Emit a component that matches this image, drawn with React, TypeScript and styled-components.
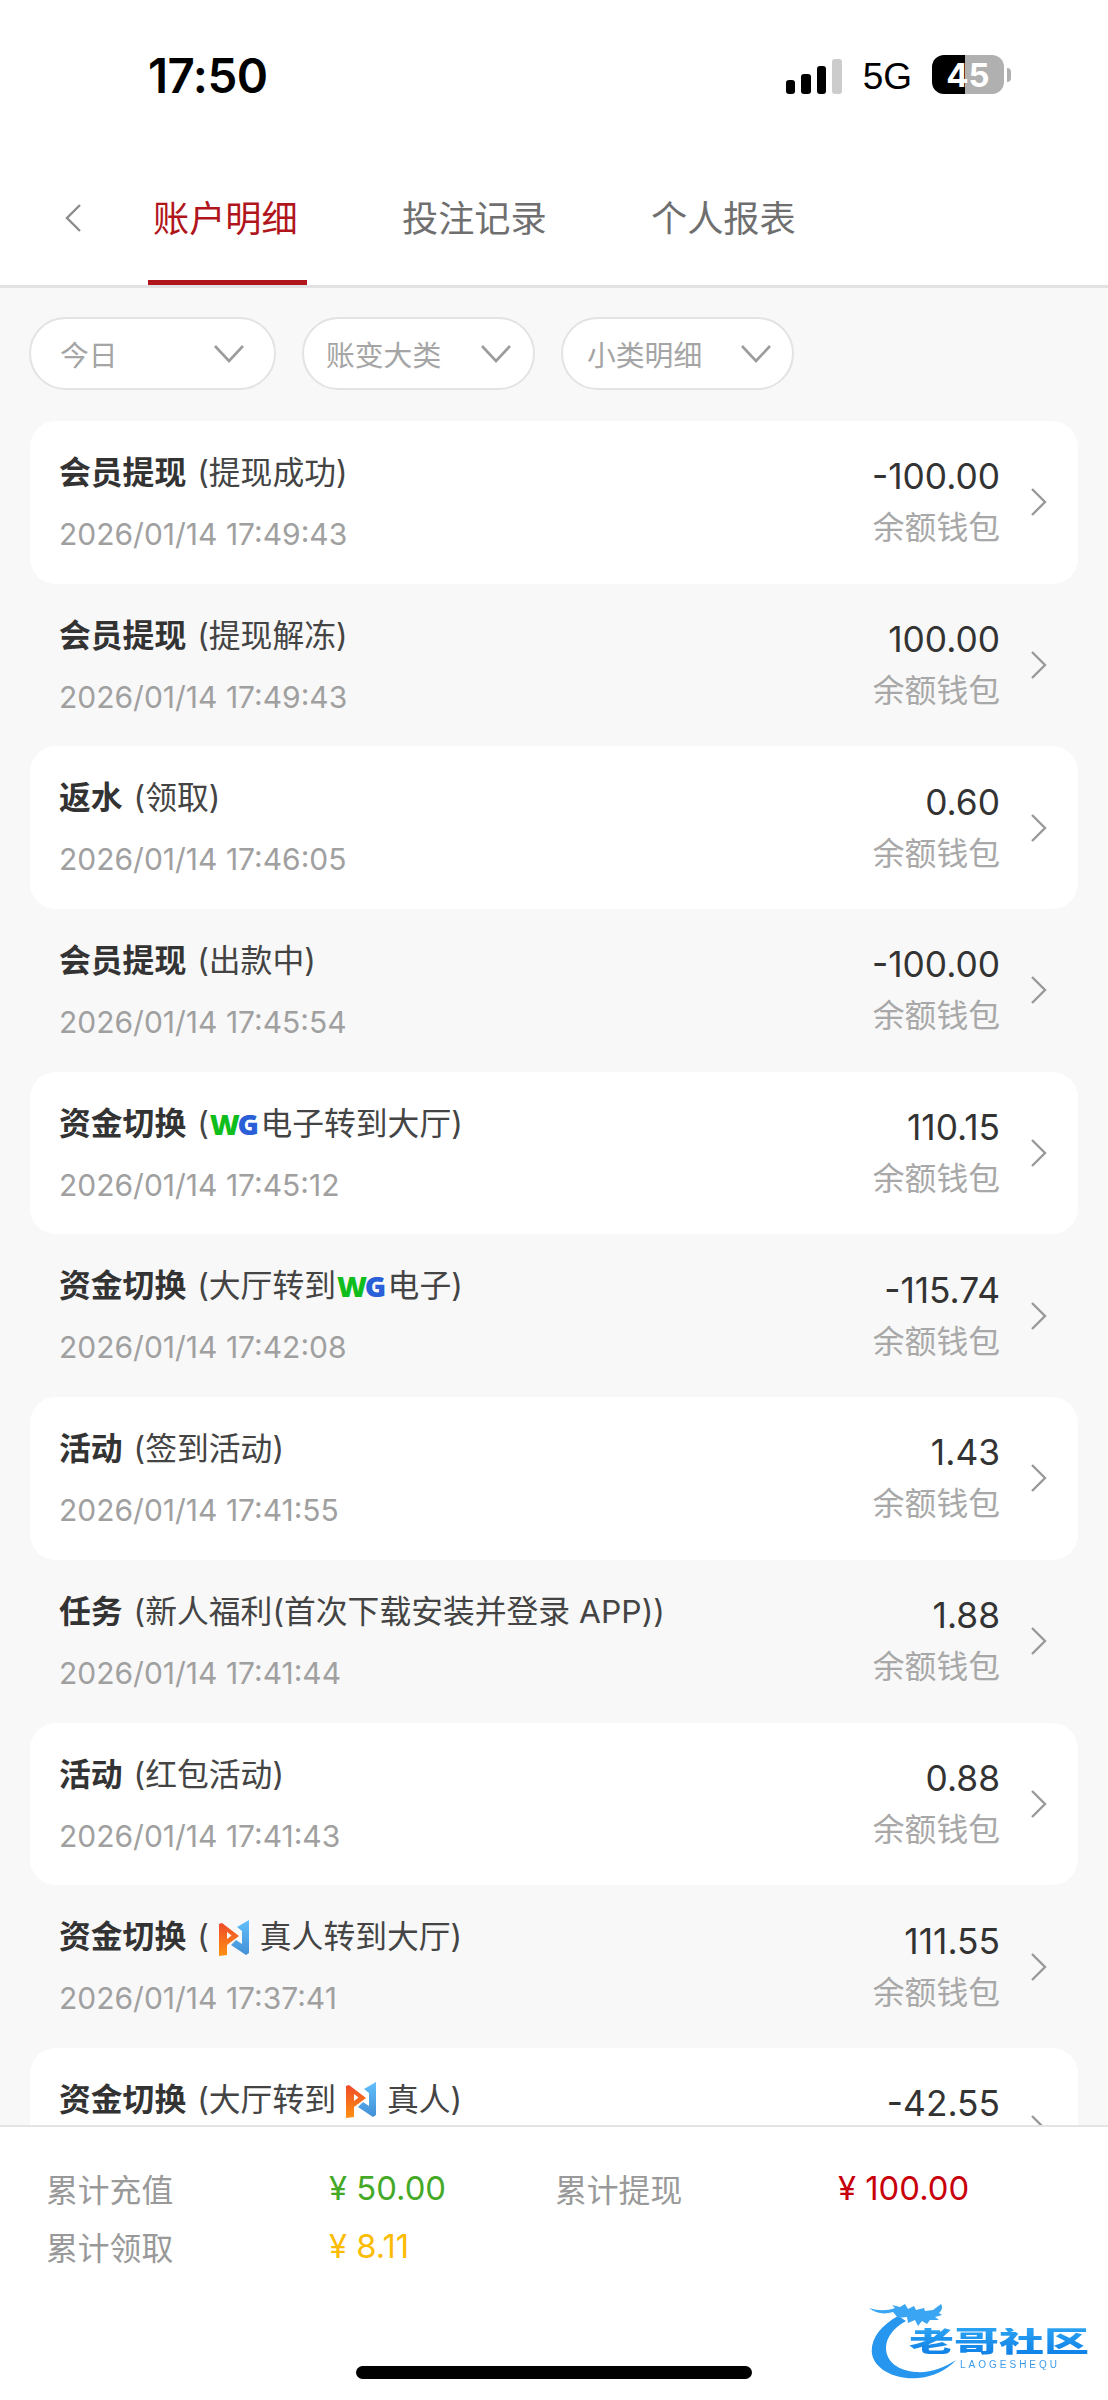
import React from 'react';
import styled, { createGlobalStyle } from 'styled-components';

const GlobalStyle = createGlobalStyle`
  html, body {
    margin: 0;
    padding: 0;
    background: #fff;
  }
  body {
    font-family: Inter, "Noto Sans CJK SC", sans-serif;
  }
`;

const Page = styled.div`
  width: 1108px;
  height: 2400px;
  display: flex;
  flex-direction: column;
  overflow: hidden;
  background: #fff;
`;

const StatusBar = styled.div`
  height: 160px;
  box-sizing: border-box;
  padding: 53px 97px 0 148px;
  display: flex;
  justify-content: space-between;
  align-items: flex-start;
  color: #000;
`;

const Clock = styled.div`
  font-size: 47.5px;
  line-height: 46px;
  font-weight: 600;
  letter-spacing: -0.5px;
`;

const StatusIcons = styled.div`
  display: flex;
  align-items: center;
  height: 39px;
  margin-top: 2px;
`;

const SignalBars = styled.div`
  display: flex;
  align-items: flex-end;
  gap: 6px;
  height: 35px;
  margin-top: 4px;
`;

const SignalBar = styled.span<{ $h: number; $off?: boolean }>`
  width: 9.5px;
  height: ${p => p.$h}px;
  border-radius: 3px;
  background: ${p => (p.$off ? '#ccc' : '#000')};
`;

const NetworkLabel = styled.span`
  font-family: 'Liberation Sans', sans-serif;
  font-size: 37px;
  line-height: 39px;
  margin: 3px 20px 0 21px;
`;

const Battery = styled.div`
  position: relative;
  width: 72px;
  height: 39px;
  border-radius: 12px;
  overflow: hidden;
  display: flex;
  align-items: center;
  justify-content: center;
  color: #fff;
  font-size: 33px;
  font-weight: 700;
  background: linear-gradient(90deg, #000 0, #000 33px, #b0b0b0 33px, #b0b0b0 100%);
`;

const BatteryNub = styled.span`
  width: 4px;
  height: 14px;
  margin-left: 3px;
  border-radius: 0 4px 4px 0;
  background: #b0b0b0;
`;

const TabBar = styled.div`
  height: 125px;
  display: flex;
  padding-left: 64px;
  border-bottom: 3px solid #e2e2e2;
`;

const BackButton = styled.div`
  width: 84px;
  padding-top: 44px;
  color: #8c8c8c;
`;

const Tabs = styled.div`
  display: flex;
  gap: 90px;
`;

const Tab = styled.div<{ $active?: boolean }>`
  position: relative;
  box-sizing: border-box;
  width: 159px;
  padding: 41px 0 0 5px;
  font-size: 36.2px;
  line-height: 36px;
  white-space: nowrap;
  color: ${p => (p.$active ? '#b1151c' : '#6f6f6f')};
  border-bottom: ${p => (p.$active ? '5px solid #b1151c' : '0')};
  height: 125px;
`;

const Content = styled.div`
  flex: 1;
  min-height: 0;
  overflow: hidden;
  background: #f8f8f8;
  padding: 29px 30px 0;
`;

const Filters = styled.div`
  display: flex;
  gap: 26px;
  margin: 0 0 31px -1px;
`;

const Filter = styled.div<{ $w: number; $left: number; $right: number }>`
  box-sizing: border-box;
  width: ${p => p.$w}px;
  height: 73px;
  padding: 0 ${p => p.$right}px 0 ${p => p.$left}px;
  display: flex;
  align-items: center;
  justify-content: space-between;
  background: #fff;
  border: 2px solid #e3e3e3;
  border-radius: 37px;
  font-size: 28.8px;
  color: #a5a5a5;
`;

const FilterCaret = styled.svg`
  width: 30px;
  height: 18px;
  color: #9c9c9c;
`;

const RowCard = styled.div<{ $filled: boolean }>`
  box-sizing: border-box;
  height: 162.7px;
  display: flex;
  justify-content: space-between;
  padding: 0 30px 0 29px;
  border-radius: 26px;
  background: ${p => (p.$filled ? '#fff' : 'transparent')};
`;

const RowMain = styled.div`
  padding-top: 33px;
`;

const RowTitle = styled.div`
  display: flex;
  align-items: center;
  height: 38px;
  font-size: 31.8px;
  line-height: 38px;
  color: #444;
  white-space: nowrap;
`;

const TitleKind = styled.span`
  font-weight: 700;
  color: #333;
  margin-right: 11px;
`;

const RowDate = styled.div`
  margin-top: 24px;
  font-size: 30px;
  line-height: 36px;
  color: #a0a0a0;
  white-space: nowrap;
`;

const RowSide = styled.div`
  display: flex;
  align-items: center;
  gap: 30px;
`;

const Figures = styled.div`
  display: flex;
  flex-direction: column;
  align-items: flex-end;
  padding-top: 1px;
`;

const Amount = styled.div`
  font-size: 35.3px;
  line-height: 40px;
  color: #333;
`;

const WalletName = styled.div`
  margin-top: 11px;
  font-size: 31.8px;
  line-height: 40px;
  color: #a8a8a8;
`;

const RowArrow = styled.svg`
  width: 18px;
  height: 28px;
  color: #999;
`;

const WgMark = styled.span`
  display: inline-flex;
  font-family: 'Open Sans', sans-serif;
  font-size: 29px;
  font-weight: 800;
  letter-spacing: -2.5px;
  margin: 0 4px 0 1px;
`;

const WgLetter = styled.span<{ $c: string }>`
  color: ${p => p.$c};
`;

const LiveMarkIcon = styled.svg`
  width: 30px;
  height: 37px;
  margin: 0 11px 0 10px;
  flex: none;
`;

const Footer = styled.div`
  position: relative;
  box-sizing: border-box;
  height: 275px;
  background: #fff;
  border-top: 2px solid #e4e4e4;
  padding: 32px 0 0 46px;
`;

const Totals = styled.div`
  display: grid;
  grid-template-columns: 283px 226px 283px 1fr;
  grid-auto-rows: 58px;
  align-items: center;
  font-size: 31.8px;
`;

const TotalLabel = styled.div`
  color: #999;
`;

const TotalValue = styled.div<{ $c: string }>`
  color: ${p => p.$c};
  font-size: 32.8px;
`;

const HomeBar = styled.div`
  width: 396px;
  height: 13px;
  margin: 91px 0 0 310px;
  border-radius: 7px;
  background: #000;
`;

const Watermark = styled.div`
  position: absolute;
  left: 868px;
  top: 173px;
  width: 228px;
  height: 82px;
  filter: blur(0.6px);
`;

const WatermarkDragon = styled.svg`
  position: absolute;
  left: 0;
  top: 0;
  width: 100px;
  height: 82px;
`;

const WatermarkText = styled.div`
  position: absolute;
  left: 41px;
  top: 28px;
  width: 184px;
  font-size: 45px;
  line-height: 45px;
  font-weight: 900;
  letter-spacing: 0;
  white-space: nowrap;
  transform: scaleY(0.62);
  transform-origin: top left;
  background: linear-gradient(180deg, #2aa2f2, #0f7fe6);
  -webkit-background-clip: text;
  background-clip: text;
  color: transparent;
`;

const WatermarkSub = styled.div`
  position: absolute;
  left: 92px;
  top: 59px;
  font-family: 'Liberation Sans', sans-serif;
  font-size: 10px;
  line-height: 12px;
  letter-spacing: 3px;
  color: #3d9be8;
  white-space: nowrap;
`;

const Chevron: React.FC<{ dir: 'left' | 'right' }> = ({ dir }) => (
  <svg width="18" height="28" viewBox="0 0 18 28" fill="none" stroke="currentColor" strokeWidth="2.4">
    <path d={dir === 'left' ? 'M16 1 3 14l13 13' : 'M2 1l13 13L2 27'} />
  </svg>
);

const LiveMark = () => (
  <LiveMarkIcon viewBox="0 0 30 37">
    <defs>
      <linearGradient id="lmOrange" x1="0" y1="0" x2="0" y2="1">
        <stop offset="0" stopColor="#ef4b2b" />
        <stop offset="1" stopColor="#ff9112" />
      </linearGradient>
      <linearGradient id="lmBlue" x1="0" y1="0" x2="0" y2="1">
        <stop offset="0" stopColor="#62c0fb" />
        <stop offset="1" stopColor="#438fd6" />
      </linearGradient>
    </defs>
    <path d="M30 1v33l-3 2-15-10 5-5 6 4V12l-5-4z" fill="url(#lmBlue)" />
    <path d="M0 5l3-1 17 13-12 9v10l-8 1z" fill="url(#lmOrange)" />
    <path d="M8 13v7l4.5-3.5z" fill="#fff" />
  </LiveMarkIcon>
);

const Wg = () => (
  <WgMark>
    <WgLetter $c="#0fbe1d">W</WgLetter>
    <WgLetter $c="#2a5fd8">G</WgLetter>
  </WgMark>
);

type RowData = {
  kind: string;
  detail: React.ReactNode;
  date: string;
  amount: string;
};

const rows: RowData[] = [
  { kind: '会员提现', detail: '(提现成功)', date: '2026/01/14 17:49:43', amount: '-100.00' },
  { kind: '会员提现', detail: '(提现解冻)', date: '2026/01/14 17:49:43', amount: '100.00' },
  { kind: '返水', detail: '(领取)', date: '2026/01/14 17:46:05', amount: '0.60' },
  { kind: '会员提现', detail: '(出款中)', date: '2026/01/14 17:45:54', amount: '-100.00' },
  { kind: '资金切换', detail: <>(<Wg />电子转到大厅)</>, date: '2026/01/14 17:45:12', amount: '110.15' },
  { kind: '资金切换', detail: <>(大厅转到<Wg />电子)</>, date: '2026/01/14 17:42:08', amount: '-115.74' },
  { kind: '活动', detail: '(签到活动)', date: '2026/01/14 17:41:55', amount: '1.43' },
  { kind: '任务', detail: '(新人福利(首次下载安装并登录 APP))', date: '2026/01/14 17:41:44', amount: '1.88' },
  { kind: '活动', detail: '(红包活动)', date: '2026/01/14 17:41:43', amount: '0.88' },
  { kind: '资金切换', detail: <>(<LiveMark />真人转到大厅)</>, date: '2026/01/14 17:37:41', amount: '111.55' },
  { kind: '资金切换', detail: <>(大厅转到<LiveMark />真人)</>, date: '2026/01/14 17:37:30', amount: '-42.55' },
];

const filters = [
  { label: '今日', w: 247, left: 29, right: 30 },
  { label: '账变大类', w: 233, left: 22, right: 22 },
  { label: '小类明细', w: 233, left: 24, right: 21 },
];

export default function App() {
  return (
    <Page>
      <GlobalStyle />
      <StatusBar>
        <Clock>17:50</Clock>
        <StatusIcons>
          <SignalBars>
            <SignalBar $h={14} />
            <SignalBar $h={20} />
            <SignalBar $h={28} />
            <SignalBar $h={35} $off />
          </SignalBars>
          <NetworkLabel>5G</NetworkLabel>
          <Battery>45</Battery>
          <BatteryNub />
        </StatusIcons>
      </StatusBar>
      <TabBar>
        <BackButton>
          <Chevron dir="left" />
        </BackButton>
        <Tabs>
          <Tab $active>账户明细</Tab>
          <Tab>投注记录</Tab>
          <Tab>个人报表</Tab>
        </Tabs>
      </TabBar>
      <Content>
        <Filters>
          {filters.map(f => (
            <Filter key={f.label} $w={f.w} $left={f.left} $right={f.right}>
              {f.label}
              <FilterCaret viewBox="0 0 30 18" fill="none" stroke="currentColor" strokeWidth="2.6">
                <path d="M1 1l14 15L29 1" />
              </FilterCaret>
            </Filter>
          ))}
        </Filters>
        {rows.map((row, i) => (
          <RowCard key={row.date + row.amount} $filled={i % 2 === 0}>
            <RowMain>
              <RowTitle>
                <TitleKind>{row.kind}</TitleKind>
                {row.detail}
              </RowTitle>
              <RowDate>{row.date}</RowDate>
            </RowMain>
            <RowSide>
              <Figures>
                <Amount>{row.amount}</Amount>
                <WalletName>余额钱包</WalletName>
              </Figures>
              <RowArrow viewBox="0 0 18 28" fill="none" stroke="currentColor" strokeWidth="2.4">
                <path d="M2 1l13 13L2 27" />
              </RowArrow>
            </RowSide>
          </RowCard>
        ))}
      </Content>
      <Footer>
        <Totals>
          <TotalLabel>累计充值</TotalLabel>
          <TotalValue $c="#45a928">¥ 50.00</TotalValue>
          <TotalLabel>累计提现</TotalLabel>
          <TotalValue $c="#c8000a">¥ 100.00</TotalValue>
          <TotalLabel>累计领取</TotalLabel>
          <TotalValue $c="#fbbc05">¥ 8.11</TotalValue>
        </Totals>
        <HomeBar />
        <Watermark>
          <WatermarkDragon viewBox="0 0 100 82">
            <path d="M30 16C12 26 2 40 4 54c3 16 24 26 46 24 14-1 28-7 38-18-12 8-26 13-40 12-17-1-30-10-30-24 0-10 7-20 20-27z" fill="#2796ee" />
            <path d="M1 8c10 3 18 3 26 0l-3-3 8 2 5-3 3 5 6-3 2 4 8-2 1 3 8-1 8-6c2 3 1 6-2 9l3 2-7 2 4 3-9 0-3 4-5-3-4 5-3-6-7 3-1-6-9 1-5-6C16 15 7 13 1 8z" fill="#3aa5f2" />
          </WatermarkDragon>
          <WatermarkText>老哥社区</WatermarkText>
          <WatermarkSub>LAOGESHEQU</WatermarkSub>
        </Watermark>
      </Footer>
    </Page>
  );
}
